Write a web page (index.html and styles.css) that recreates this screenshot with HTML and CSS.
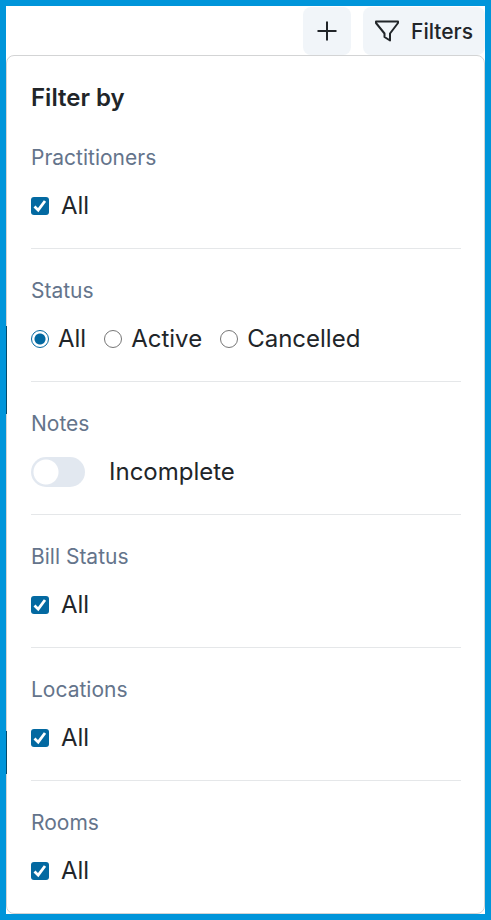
FILE: index.html
```html
<!DOCTYPE html>
<html lang="en">
<head>
    <meta charset="UTF-8">
    <meta name="viewport" content="width=device-width, initial-scale=1.0">
    <title>Appointments - Filters</title>
    <link rel="stylesheet" href="styles.css">
</head>
<body>
    <header class="toolbar">
        <button type="button" class="btn btn-icon" aria-label="Add">
            <svg width="24" height="24" viewBox="0 0 24 24" fill="none" stroke="currentColor" stroke-width="2">
                <path d="M12 2.5v19M2.5 12h19"/>
            </svg>
        </button>
        <button type="button" class="btn">
            <svg width="24" height="24" viewBox="0 0 24 24" fill="none" stroke="currentColor" stroke-width="2" stroke-linejoin="round">
                <path d="M1 2.500h22v1.500L15 14.500v7L9.500 18v-3.500L1 4z"/>
            </svg>
            Filters
        </button>
    </header>

    <form class="filter-panel">
        <!-- calendar events showing behind the panel edge -->
        <span class="event-edge event-morning"></span>
        <span class="event-edge event-evening"></span>

        <h1>Filter by</h1>

        <fieldset>
            <legend>Practitioners</legend>
            <label class="check"><input type="checkbox" name="practitioners" checked>All</label>
        </fieldset>

        <fieldset>
            <legend>Status</legend>
            <div class="radio-group">
                <label class="radio"><input type="radio" name="status" value="all" checked>All</label>
                <label class="radio"><input type="radio" name="status" value="active">Active</label>
                <label class="radio"><input type="radio" name="status" value="cancelled">Cancelled</label>
            </div>
        </fieldset>

        <fieldset>
            <legend>Notes</legend>
            <label class="switch"><input type="checkbox" name="incomplete" role="switch">Incomplete</label>
        </fieldset>

        <fieldset>
            <legend>Bill Status</legend>
            <label class="check"><input type="checkbox" name="bill_status" checked>All</label>
        </fieldset>

        <fieldset>
            <legend>Locations</legend>
            <label class="check"><input type="checkbox" name="locations" checked>All</label>
        </fieldset>

        <fieldset>
            <legend>Rooms</legend>
            <label class="check"><input type="checkbox" name="rooms" checked>All</label>
        </fieldset>
    </form>
</body>
</html>
```

FILE: styles.css
```css
* {
    box-sizing: border-box;
}
body {
    margin: 0;
    min-height: 100vh;
    border: 6px solid #0095da;
    background: #fff;
    color: #212529;
    font-family: Inter, sans-serif;
    font-size: 24px;
    line-height: 36px;
}
.toolbar {
    display: flex;
    justify-content: flex-end;
    gap: 12px;
    padding-top: 1px;
}
.btn {
    display: flex;
    align-items: center;
    justify-content: center;
    gap: 12px;
    height: 48px;
    padding: 0 12px;
    border: none;
    border-radius: 8px;
    background: #f1f5f9;
    color: #212529;
    font-family: inherit;
    font-size: 21px;
    font-weight: 500;
    cursor: pointer;
}
.btn-icon {
    width: 48px;
}
.filter-panel {
    position: relative;
    padding: 24px 23px 24px 24px;
    border: 1px solid #d3d4d5;
    border-radius: 8px;
}
.event-edge {
    position: absolute;
    left: -1px;
    width: 1px;
    background: #044a6b;
}
.event-morning {
    top: 270px;
    height: 88px;
}
.event-evening {
    top: 675px;
    height: 43px;
}
h1 {
    margin: 0;
    font-size: 24px;
    font-weight: 600;
}
fieldset {
    margin: 0 0 24px;
    padding: 26px 0 0;
    border: none;
}
fieldset + fieldset {
    border-top: 1px solid #e5e7e9;
}
fieldset:last-child {
    margin-bottom: 0;
}
legend {
    float: left;
    width: 100%;
    margin-bottom: 14px;
    padding: 0;
    color: #64748b;
    font-size: 21px;
    line-height: 32px;
}
label {
    display: flex;
    align-items: center;
}
.check,
.switch,
.radio-group {
    clear: both;
}
.check {
    gap: 12px;
}
.radio-group {
    display: flex;
    flex-wrap: wrap;
    column-gap: 18px;
}
.radio {
    gap: 9px;
}
.switch {
    gap: 24px;
}
input {
    appearance: none;
    flex: none;
    width: 18px;
    height: 18px;
    margin: 0;
}
.check input {
    border: 1px solid #767676;
    border-radius: 3px;
}
.check input:checked {
    border: none;
    background: #0369a1 url("data:image/svg+xml,%3Csvg xmlns='http://www.w3.org/2000/svg' viewBox='0 0 18 18'%3E%3Cpath d='M3.500 9.500l3.700 3.700L14 4' fill='none' stroke='white' stroke-width='2.800'/%3E%3C/svg%3E");
}
.radio input {
    border: 1px solid #767676;
    border-radius: 50%;
}
.radio input:checked {
    border-color: #0369a1;
    background: radial-gradient(circle, #0369a1 5px, transparent 6px);
}
.switch input {
    width: 54px;
    height: 30px;
    border-radius: 15px;
    background: radial-gradient(circle at 15px 15px, #fff 12px, #e2e8f0 13px);
}
.switch input:checked {
    background: radial-gradient(circle at 39px 15px, #fff 12px, #0369a1 13px);
}
```
